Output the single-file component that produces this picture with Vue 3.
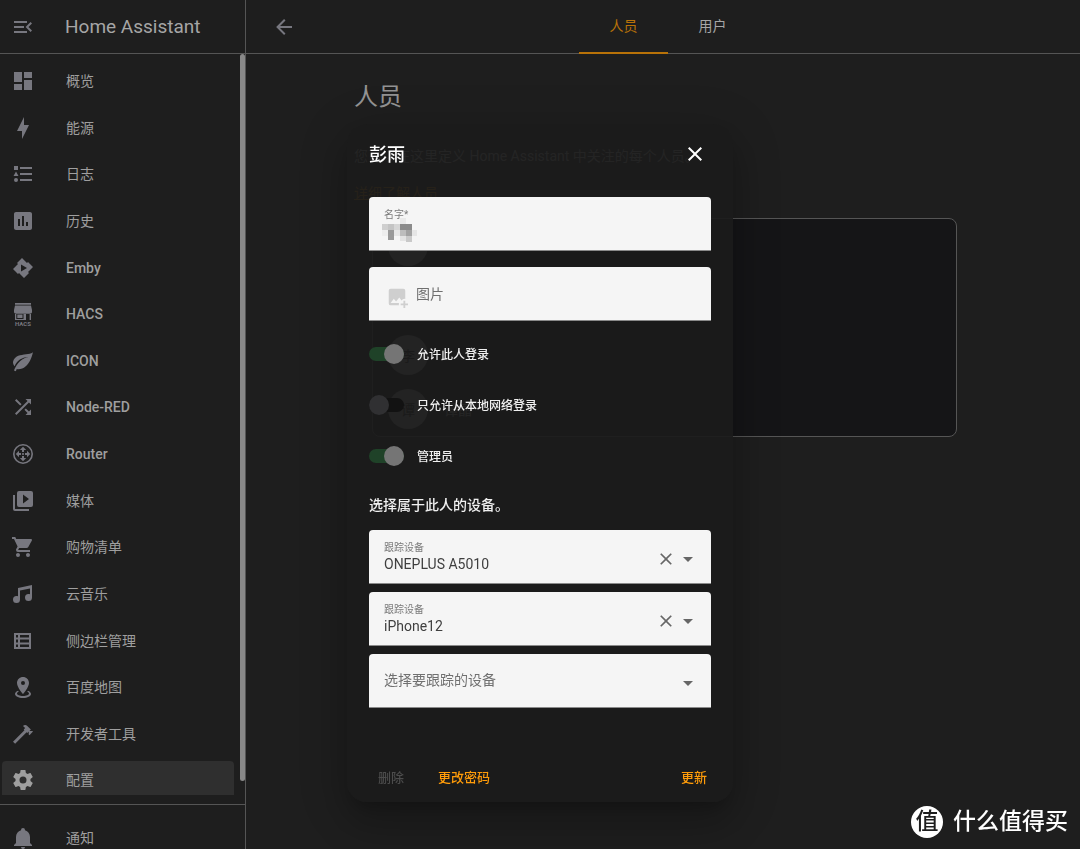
<script setup>
import { ref } from 'vue'

const items = [
  { label: '概览', d: 'M13,3V9H21V3M13,21H21V11H13M3,21H11V15H3M3,13H11V3H3V13Z' },
  { label: '能源', d: 'M11,15H6L13,1V9H18L11,23V15Z' },
  { label: '日志', d: 'M5,9.5L7.5,14H2.5L5,9.5M3,4H7V8H3V4M5,20A2,2 0 0,0 7,18A2,2 0 0,0 5,16A2,2 0 0,0 3,18A2,2 0 0,0 5,20M9,5V7H21V5H9M9,19H21V17H9V19M9,13H21V11H9V13Z' },
  { label: '历史', d: 'M9 17H7V10H9V17M13 17H11V7H13V17M17 17H15V13H17V17M19 3H5C3.9 3 3 3.9 3 5V19C3 20.1 3.9 21 5 21H19C20.1 21 21 20.1 21 19V5C21 3.9 20.1 3 19 3Z' },
  { label: 'Emby', latin: true, d: 'M11,2L6,7L7,8L2,13L7,18L8,17L13,22L18,17L17,16L22,11L17,6L16,7L11,2M10,8.5L16,12L10,15.5V8.5Z' },
  { label: 'HACS', latin: true, hacs: true, d: 'M4 1H20V2.8H4ZM4 3.6H20L21 8V10C21 11 20 11.7 19 11.7H5C4 11.7 3 11 3 10V8ZM4 12H5.3V17H12.5V12H14V18H4ZM6.3 12.5H11.5V16H6.3ZM14 12H15V18H14ZM18.6 12H20V18H18.6Z' },
  { label: 'ICON', latin: true, d: 'M22,3C21,5 14,5.25 9,6.25C4,7.25 2,11.5 2,13.5C2,15.5 3.75,17.25 3.75,17.25C7,8 17,8 17,8C8,10 4.4,18.2 3,21.6L4.8,22.3L5.8,20C6.3,20.2 6.9,20.3 7.3,20.3C19,20.3 22,3 22,3Z' },
  { label: 'Node-RED', latin: true, d: 'M14.83,13.41L13.42,14.82L16.55,17.95L14.5,20H20V14.5L17.96,16.54L14.83,13.41M14.5,4L16.54,6.04L4,18.59L5.41,20L17.96,7.46L20,9.5V4M10.59,9.17L5.41,4L4,5.41L9.17,10.58L10.59,9.17Z' },
  { label: 'Router', latin: true, d: 'M12,2A10,10 0 0,1 22,12A10,10 0 0,1 12,22A10,10 0 0,1 2,12A10,10 0 0,1 12,2M12,3.6A8.4,8.4 0 0,0 3.6,12A8.4,8.4 0 0,0 12,20.4A8.4,8.4 0 0,0 20.4,12A8.4,8.4 0 0,0 12,3.6M12,4.8L15.2,8H13V10H11V8H8.8ZM12,19.2L8.8,16H11V14H13V16H15.2ZM4.8,12L8,8.8V11H10V13H8V15.2ZM19.2,12L16,15.2V13H14V11H16V8.8ZM12,10.9A1.1,1.1 0 0,1 12,13.1A1.1,1.1 0 0,1 12,10.9Z' },
  { label: '媒体', d: 'M4,6H2V20A2,2 0 0,0 4,22H18V20H4V6M20,2H8A2,2 0 0,0 6,4V16A2,2 0 0,0 8,18H20A2,2 0 0,0 22,16V4A2,2 0 0,0 20,2M12,14.5V5.5L18,10L12,14.5Z' },
  { label: '购物清单', d: 'M17,18C15.89,18 15,18.89 15,20A2,2 0 0,0 17,22A2,2 0 0,0 19,20C19,18.89 18.1,18 17,18M1,2V4H3L6.6,11.59L5.24,14.04C5.09,14.32 5,14.65 5,15A2,2 0 0,0 7,17H19V15H7.42A0.25,0.25 0 0,1 7.17,14.75C7.17,14.7 7.18,14.66 7.2,14.63L8.1,13H15.55C16.3,13 16.96,12.58 17.3,11.97L20.88,5.5C20.95,5.34 21,5.17 21,5A1,1 0 0,0 20,4H5.21L4.27,2M7,18C5.89,18 5,18.89 5,20A2,2 0 0,0 7,22A2,2 0 0,0 9,20C9,18.89 8.1,18 7,18Z' },
  { label: '云音乐', d: 'M21,3V15.5A3.5,3.5 0 0,1 17.5,19A3.5,3.5 0 0,1 14,15.5A3.5,3.5 0 0,1 17.5,12C18.04,12 18.55,12.12 19,12.34V6.47L9,8.6V17.5A3.5,3.5 0 0,1 5.5,21A3.5,3.5 0 0,1 2,17.5A3.5,3.5 0 0,1 5.5,14C6.04,14 6.55,14.12 7,14.34V6L21,3Z' },
  { label: '侧边栏管理', d: 'M3 4V20H20V4ZM5 6H7V8.5H5ZM9 6H18V8.5H9ZM5 10.5H7V13.5H5ZM9 10.5H18V13.5H9ZM5 15.5H7V18H5ZM9 15.5H18V18H9Z' },
  { label: '百度地图', d: 'M12,2C15.31,2 18,4.66 18,7.95C18,12.41 12,19 12,19C12,19 6,12.41 6,7.95C6,4.66 8.69,2 12,2M12,6A2,2 0 0,0 10,8A2,2 0 0,0 12,10A2,2 0 0,0 14,8A2,2 0 0,0 12,6M20,19C20,21.21 16.42,23 12,23C7.58,23 4,21.21 4,19C4,17.71 5.22,16.56 7.11,15.83L7.75,16.74C6.67,17.19 6,17.81 6,18.5C6,19.88 8.69,21 12,21C15.31,21 18,19.88 18,18.5C18,17.81 17.33,17.19 16.25,16.74L16.89,15.83C18.78,16.56 20,17.71 20,19Z' },
  { label: '开发者工具', d: 'M2,19.63L13.43,8.2L12.72,7.5L14.14,6.07L12,3.89C13.2,2.7 15.09,2.7 16.27,3.89L19.87,7.5L18.45,8.91H21.29L22,9.62L18.45,13.21L17.74,12.5V9.62L16.27,11.04L15.56,10.33L4.13,21.76L2,19.63Z' },
  { label: '配置', active: true, d: 'M12,15.5A3.5,3.5 0 0,1 8.5,12A3.5,3.5 0 0,1 12,8.5A3.5,3.5 0 0,1 15.5,12A3.5,3.5 0 0,1 12,15.5M19.43,12.97C19.47,12.65 19.5,12.33 19.5,12C19.5,11.67 19.47,11.34 19.43,11L21.54,9.37C21.73,9.22 21.78,8.95 21.66,8.73L19.66,5.27C19.54,5.05 19.27,4.96 19.05,5.05L16.56,6.05C16.04,5.66 15.5,5.32 14.87,5.07L14.5,2.42C14.46,2.18 14.25,2 14,2H10C9.75,2 9.54,2.18 9.5,2.42L9.13,5.07C8.5,5.32 7.96,5.66 7.44,6.05L4.95,5.05C4.73,4.96 4.46,5.05 4.34,5.27L2.34,8.73C2.21,8.95 2.27,9.22 2.46,9.37L4.57,11C4.53,11.34 4.5,11.67 4.5,12C4.5,12.33 4.53,12.65 4.57,12.97L2.46,14.63C2.27,14.78 2.21,15.05 2.34,15.27L4.34,18.73C4.46,18.95 4.73,19.03 4.95,18.95L7.44,17.94C7.96,18.34 8.5,18.68 9.13,18.93L9.5,21.58C9.54,21.82 9.75,22 10,22H14C14.25,22 14.46,21.82 14.5,21.58L14.87,18.93C15.5,18.67 16.04,18.34 16.56,17.94L19.05,18.95C19.27,19.03 19.54,18.95 19.66,18.73L21.66,15.27C21.78,15.05 21.73,14.78 21.54,14.63L19.43,12.97Z' },
]

const people = [
  { id: 1, initial: '', name: '' },
  { id: 2, initial: '', name: '' },
  { id: 3, initial: '李', name: '' },
  { id: 4, initial: '谭', name: '谭晶' },
]

const switches = ref([
  { id: 'login', label: '允许此人登录', on: true },
  { id: 'local', label: '只允许从本地网络登录', on: false },
  { id: 'admin', label: '管理员', on: true },
])

const trackers = ref([
  { id: 'tracker-1', value: 'ONEPLUS A5010' },
  { id: 'tracker-2', value: 'iPhone12' },
])

const name = ref('')

const mosaic = [
  [18, 0, 6, 6, '#e9e9e9'], [0, 6, 6, 6, '#cfcfcf'], [6, 6, 6, 6, '#c4c4c4'], [12, 6, 6, 6, '#d6d6d6'],
  [18, 6, 12, 6, '#8b8b8b'], [0, 12, 6, 6, '#ededed'], [6, 12, 6, 10, '#999999'], [12, 12, 6, 6, '#e6e6e6'],
  [18, 12, 6, 6, '#bdbdbd'], [24, 12, 6, 6, '#a2a2a2'], [30, 12, 5, 6, '#e6e6e6'], [18, 18, 6, 5, '#e3e3e3'],
  [24, 18, 6, 6, '#c9c9c9'],
]
</script>

<template>
  <div class="app">
    <aside class="sidebar">
      <header class="brand">
        <button class="icon-btn menu" type="button" aria-label="折叠侧边栏">
          <svg viewBox="0 0 24 24"><path d="M21,15.61L19.59,17L14.58,12L19.59,7L21,8.39L17.44,12L21,15.61M3,6H16V8H3V6M3,13V11H13V13H3M3,18V16H16V18H3Z" /></svg>
        </button>
        <span class="brand-name">Home Assistant</span>
      </header>
      <nav class="nav">
        <ul class="nav-list">
          <li v-for="item in items" :key="item.label">
            <a href="#" class="nav-item" :class="{ active: item.active, latin: item.latin }">
              <svg viewBox="0 0 24 24">
                <path :d="item.d" fill-rule="evenodd" />
                <text v-if="item.hacs" x="12" y="24" text-anchor="middle" class="hacs-text">HACS</text>
              </svg>
              <span>{{ item.label }}</span>
            </a>
          </li>
        </ul>
        <div class="thumb"></div>
      </nav>
      <div class="bottom">
        <a href="#" class="nav-item">
          <svg viewBox="0 0 24 24"><path d="M21,19V20H3V19L5,17V11C5,7.9 7.03,5.17 10,4.29C10,4.19 10,4.1 10,4A2,2 0 0,1 12,2A2,2 0 0,1 14,4C14,4.1 14,4.19 14,4.29C16.97,5.17 19,7.9 19,11V17L21,19M14,21A2,2 0 0,1 12,23A2,2 0 0,1 10,21" /></svg>
          <span>通知</span>
        </a>
      </div>
    </aside>

    <div class="page">
      <header class="toolbar">
        <button class="icon-btn back" type="button" aria-label="返回">
          <svg viewBox="0 0 24 24"><path d="M20,11V13H8L13.5,18.5L12.08,19.92L4.16,12L12.08,4.08L13.5,5.5L8,11H20Z" /></svg>
        </button>
        <nav class="tabs">
          <a href="#" class="tab selected">人员</a>
          <a href="#" class="tab">用户</a>
        </nav>
      </header>
      <main class="content">
        <section class="section">
          <h1>人员</h1>
          <p>您可以在这里定义 Home Assistant 中关注的每个人员。</p>
          <a href="#" class="more">详细了解人员</a>
          <ul class="card">
            <li v-for="p in people" :key="p.id">
              <span class="avatar">{{ p.initial }}</span>
              <span>{{ p.name }}</span>
            </li>
          </ul>
        </section>
      </main>
    </div>

    <div class="overlay">
      <form class="dialog" role="dialog" aria-labelledby="dialog-title" @submit.prevent>
        <header class="dialog-head">
          <h2 id="dialog-title">彭雨</h2>
          <button class="icon-btn close" type="button" aria-label="关闭">
            <svg viewBox="0 0 24 24"><path d="M19,6.41L17.59,5L12,10.59L6.41,5L5,6.41L10.59,12L5,17.59L6.41,19L12,13.41L17.59,19L19,17.59L13.41,12L19,6.41Z" /></svg>
          </button>
        </header>

        <div class="stack">
          <div class="field">
            <label class="small" for="name">名字*</label>
            <input id="name" v-model="name" type="text" />
            <svg class="mosaic" viewBox="0 0 36 24" aria-hidden="true">
              <rect v-for="(m, i) in mosaic" :key="i" :x="m[0]" :y="m[1]" :width="m[2]" :height="m[3]" :fill="m[4]" />
            </svg>
          </div>
          <div class="field picture">
            <input id="picture" class="file" type="file" />
            <label for="picture">
              <svg viewBox="0 0 24 24"><path d="M5,3A2,2 0 0,0 3,5V19A2,2 0 0,0 5,21H14.09A6,6 0 0,1 14,20A6,6 0 0,1 14.2,18.5H5L8.5,14L11,17L14.5,12.5L17,15.8A6,6 0 0,1 20,14A6,6 0 0,1 21,14.09V5A2,2 0 0,0 19,3H5M19,16V19H16V21H19V24H21V21H24V19H21V16H19Z" /></svg>
              <span>图片</span>
            </label>
          </div>
        </div>

        <div class="switches">
          <div v-for="s in switches" :key="s.id" class="switch-row">
            <input :id="s.id" v-model="s.on" class="switch" type="checkbox" role="switch" />
            <label :for="s.id">{{ s.label }}</label>
          </div>
        </div>

        <p class="hint">选择属于此人的设备。</p>

        <div class="trackers">
          <div v-for="t in trackers" :key="t.id" class="field">
            <label class="small" :for="t.id">跟踪设备</label>
            <select :id="t.id" v-model="t.value">
              <option>{{ t.value }}</option>
            </select>
            <div class="tools">
              <button class="clear" type="button" aria-label="清除">
                <svg viewBox="0 0 24 24"><path d="M19,6.41L17.59,5L12,10.59L6.41,5L5,6.41L10.59,12L5,17.59L6.41,19L12,13.41L17.59,19L19,17.59L13.41,12L19,6.41Z" /></svg>
              </button>
              <svg class="caret" viewBox="0 0 10 5"><path d="M0 0H10L5 5Z" /></svg>
            </div>
          </div>
          <div class="field">
            <select id="tracker-new" class="empty" aria-label="选择要跟踪的设备">
              <option>选择要跟踪的设备</option>
            </select>
            <div class="tools">
              <svg class="caret" viewBox="0 0 10 5"><path d="M0 0H10L5 5Z" /></svg>
            </div>
          </div>
        </div>

        <footer class="actions">
          <button type="button" disabled>删除</button>
          <button type="button">更改密码</button>
          <button type="submit" class="submit">更新</button>
        </footer>
      </form>
    </div>

    <div class="watermark">
      <span class="logo">值</span>
      <span>什么值得买</span>
    </div>
  </div>
</template>

<style>
body {
  margin: 0;
  background: #1e1e1e;
}
</style>

<style scoped>
.app {
  display: flex;
  height: 100vh;
  overflow: hidden;
  background: #1e1e1e;
  color: #9f9f9f;
  font-family: Roboto, "Noto Sans CJK SC", sans-serif;
  font-size: 14px;
}
.app *,
.app *::before,
.app *::after {
  box-sizing: border-box;
}
ul, h1, h2, p {
  margin: 0;
  padding: 0;
  list-style: none;
}
a {
  color: inherit;
  text-decoration: none;
}
button, input, select {
  font-family: inherit;
  padding: 0;
  border: 0;
  background: none;
}
svg {
  display: block;
  fill: currentColor;
}
.icon-btn {
  display: grid;
  place-items: center;
  width: 40px;
  height: 40px;
  color: #77777f;
}
.icon-btn svg {
  width: 24px;
}

.sidebar {
  flex: none;
  display: flex;
  flex-direction: column;
  width: 246px;
  border-right: 1px solid #555;
}
.brand {
  display: flex;
  align-items: center;
  gap: 22px;
  height: 54px;
  padding-left: 3px;
  border-bottom: 1px solid #555;
}
.brand-name {
  font-size: 19px;
  color: #a6a6a6;
}
.nav {
  position: relative;
  flex: 1;
  min-height: 0;
  padding-top: 4px;
  overflow: hidden;
}
.nav-list {
  display: grid;
  grid-auto-rows: 1fr;
  height: calc(100% + 9px);
}
.nav-item {
  display: flex;
  align-items: center;
  gap: 31px;
  height: 38px;
  margin: 4px 11px 0 2px;
  padding-left: 9px;
  border-radius: 4px;
}
.nav-item span {
  padding-bottom: 2px;
}
.nav-item.latin span {
  padding-bottom: 0;
  font-weight: 500;
}
.nav-item svg {
  flex: none;
  width: 24px;
  color: #77777f;
  overflow: visible;
}
.nav-item.active {
  background: #2f2f2f;
}
.nav-item.active svg {
  color: #9f9f9f;
}
.hacs-text {
  font-size: 6px;
  font-weight: 700;
}
.thumb {
  position: absolute;
  top: 0;
  right: 0;
  bottom: 14px;
  width: 5px;
  border-radius: 3px;
  background: #888;
}
.bottom {
  height: 45px;
  margin-top: 9px;
  padding-top: 10px;
  border-top: 1px solid #555;
}

.page {
  flex: 1;
  min-width: 0;
}
.toolbar {
  display: grid;
  grid-template-columns: 1fr auto 1fr;
  align-items: center;
  height: 54px;
  padding-left: 10px;
  border-bottom: 1px solid #555;
}
.back {
  margin-left: 8px;
}
.tabs {
  display: flex;
  height: 54px;
}
.tab {
  width: 89px;
  line-height: 52px;
  text-align: center;
  color: #a6a6a6;
}
.selected {
  color: #b87208;
  border-bottom: 2px solid #b87208;
}
.content {
  padding-left: 2px;
}
.section {
  max-width: 620px;
  margin: 0 auto;
  padding-top: 23px;
}
h1 {
  font-size: 24px;
  font-weight: 400;
  line-height: 40px;
  color: #939393;
}
p {
  line-height: 20px;
}
.section p {
  margin-top: 29px;
}
.more {
  display: block;
  width: max-content;
  margin-top: 17px;
  line-height: 20px;
  color: #b87208;
  text-decoration: underline;
}
.card {
  display: grid;
  grid-auto-rows: 1fr;
  height: 219px;
  margin: 15px 17px 0 18px;
  border: 1px solid #555;
  border-radius: 8px;
  background: #151517;
}
.card li {
  display: flex;
  align-items: center;
  gap: 16px;
  padding-left: 15px;
}
.avatar {
  display: grid;
  place-items: center;
  width: 40px;
  height: 40px;
  border-radius: 50%;
  background: #888;
  color: #111;
}

.overlay {
  position: fixed;
  inset: 0;
  display: flex;
  align-items: flex-start;
  justify-content: center;
  padding-top: 124px;
}
.dialog {
  width: 386px;
  padding: 10px 22px 4px;
  border-radius: 20px;
  background: rgba(27, 27, 27, 0.93);
  box-shadow: 0 11px 15px -7px rgba(0, 0, 0, 0.2), 0 24px 38px 3px rgba(0, 0, 0, 0.14), 0 9px 46px 8px rgba(0, 0, 0, 0.12);
}
.dialog-head {
  display: flex;
  align-items: center;
  justify-content: space-between;
  height: 40px;
  margin-bottom: 23px;
}
h2 {
  padding-bottom: 2px;
  font-size: 18px;
  font-weight: 500;
  color: #fff;
}
.close {
  width: 32px;
  color: #fff;
}
.stack {
  display: grid;
  gap: 16px;
}
.field {
  position: relative;
  height: 54px;
  border-bottom: 1px solid #8a8a8a;
  border-radius: 4px 4px 0 0;
  background: #f5f5f5;
}
.field input,
.field select {
  display: block;
  width: 100%;
  height: 53px;
  padding: 15px 64px 0 15px;
  font-size: 14px;
  color: #3f3f3f;
  appearance: none;
  outline: 0;
}
.field select.empty {
  padding-top: 0;
  padding-bottom: 2px;
  color: #707070;
}
.small {
  position: absolute;
  top: 11px;
  left: 15px;
  font-size: 10px;
  line-height: 14px;
  color: #7a7a7a;
}
.mosaic {
  position: absolute;
  top: 21px;
  left: 13px;
  width: 36px;
}
.field .file {
  position: absolute;
  opacity: 0;
}
.picture label {
  display: flex;
  align-items: center;
  gap: 8px;
  height: 53px;
  padding-left: 17px;
  color: #6f6f6f;
}
.picture span {
  padding-bottom: 2px;
}
.picture svg {
  width: 22px;
  margin-top: 6px;
  color: #cfcfcf;
}
.tools {
  position: absolute;
  top: 5px;
  right: 18px;
  bottom: 0;
  display: flex;
  align-items: center;
  gap: 7px;
  color: #666;
  pointer-events: none;
}
.clear {
  color: inherit;
  pointer-events: auto;
}
.clear svg {
  width: 20px;
}
.caret {
  width: 10px;
}
.switches {
  display: grid;
  gap: 31px;
  margin-top: 23px;
}
.switch-row {
  display: flex;
  align-items: center;
  gap: 13px;
  height: 20px;
  font-size: 12px;
  font-weight: 500;
  color: #f0f0f0;
}
.switch-row label {
  padding-bottom: 2px;
}
.switch {
  position: relative;
  width: 35px;
  height: 20px;
  margin: 0;
  appearance: none;
}
.switch::before {
  content: "";
  position: absolute;
  inset: 3px 0;
  border-radius: 7px;
  background: #121212;
}
.switch::after {
  content: "";
  position: absolute;
  top: 0;
  left: 0;
  width: 20px;
  height: 20px;
  border-radius: 50%;
  background: #303032;
}
.switch:checked::before {
  background: #1f4228;
}
.switch:checked::after {
  left: 15px;
  background: #757575;
}
.hint {
  margin-top: 29px;
  font-weight: 500;
  color: #f0f0f0;
}
.trackers {
  display: grid;
  gap: 8px;
  margin-top: 15px;
}
.actions {
  display: flex;
  gap: 18px;
  margin-top: 48px;
  padding: 0 4px 0 1px;
}
.actions button {
  height: 42px;
  padding: 0 8px 2px;
  font-size: 13px;
  font-weight: 500;
  color: #ff9c0a;
}
.actions button:disabled {
  color: #4c4c4c;
}
.actions .submit {
  margin-left: auto;
  padding-right: 0;
}

.watermark {
  position: fixed;
  right: 12px;
  bottom: 11px;
  display: flex;
  align-items: center;
  gap: 10px;
  font-size: 23px;
  font-weight: 500;
  line-height: 32px;
  color: #fff;
}
.logo {
  width: 32px;
  height: 32px;
  border-radius: 50%;
  background: #fff;
  color: #1e1e1e;
  text-align: center;
}
</style>
